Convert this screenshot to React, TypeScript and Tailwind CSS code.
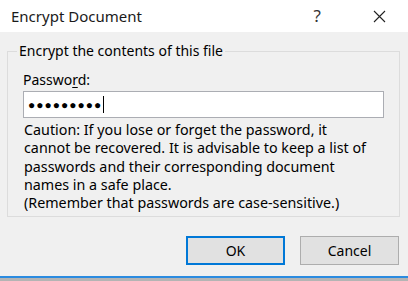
export default function App() {
  const font = { fontFamily: '"Noto Sans", "Open Sans", sans-serif' };
  return (
    <div
      className="w-[408px] h-[281px] overflow-hidden bg-[#f0f0f0] flex flex-col text-[14px] text-black font-['Noto_Sans',sans-serif]"
      style={font}
    >
      {/* title bar */}
      <div className="h-[32px] bg-white flex items-center pl-[11px] pr-[22px] shrink-0">
        <span className="text-[15px] text-[#1a1a1a]">Encrypt Document</span>
        <span className="ml-auto text-[17px] text-[#333] mr-[52px]">?</span>
        <svg width="13" height="13" viewBox="0 0 13 13" className="mt-[1px]">
          <path d="M1 1L12 12M12 1L1 12" stroke="#222" strokeWidth="1.1" />
        </svg>
      </div>

      {/* body */}
      <div className="flex-1 pl-[7px] pr-[8px]">
        <fieldset className="mt-[9px] border border-[#dcdcdc] h-[176px] px-[15px]">
          <legend className="-ml-[6px] px-[2px] leading-[20px] text-[14px]">
            Encrypt the contents of this file
          </legend>
          <div className="mt-[9px] leading-[20px]">
            Passwo<span className="underline underline-offset-2">r</span>d:
          </div>
          <div className="mt-[1px] h-[27px] border border-[#abadb3] bg-white flex items-center pl-[4px]">
            <span className="text-[12px] tracking-[1px] leading-none">●●●●●●●●●</span>
            <span className="ml-[1px] w-[1px] h-[17px] bg-black" />
          </div>
          <p className="mt-[3px] leading-[18.3px] pl-[1px] text-[14.3px] whitespace-nowrap">
            Caution: If you lose or forget the password, it
            <br />
            cannot be recovered. It is advisable to keep a list of
            <br />
            passwords and their corresponding document
            <br />
            names in a safe place.
            <br />
            (Remember that passwords are case-sensitive.)
          </p>
        </fieldset>

        <div className="mt-[19px] flex justify-end gap-[15px] pr-[1px]">
          <button
            type="button"
            className="w-[99px] h-[29px] bg-[#e1e1e1] border-2 border-[#0078d7] text-[14px] leading-none"
          >
            OK
          </button>
          <button
            type="button"
            className="w-[99px] h-[29px] bg-[#e1e1e1] border border-[#adadad] text-[14px] leading-none"
          >
            Cancel
          </button>
        </div>
      </div>

      <div className="h-[2px] bg-[#2b8be0] shrink-0" />
      <div className="h-[3px] bg-[#b4b4b4] shrink-0" />
    </div>
  );
}
